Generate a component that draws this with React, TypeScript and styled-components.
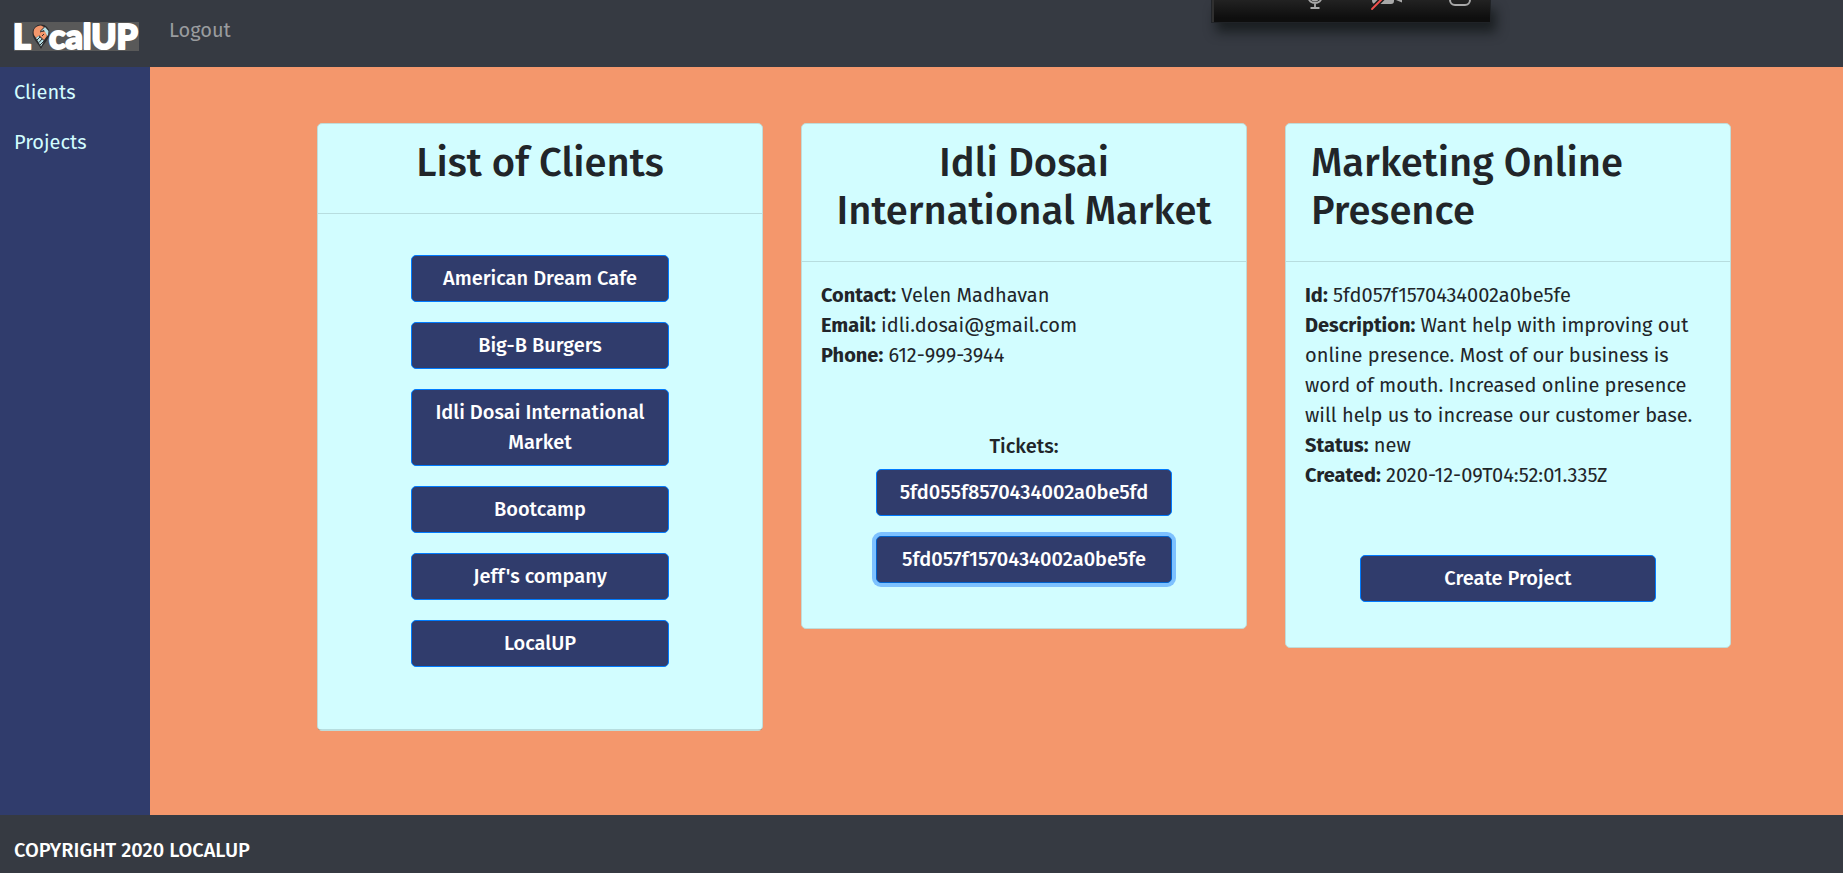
import React, { useState } from 'react';
import styled, { createGlobalStyle, css } from 'styled-components';

const color = {
  slate: '#363a42',
  navy: '#303c6c',
  coral: '#f4976c',
  ice: '#d2fdff',
  ink: '#212529',
  line: 'rgba(0, 0, 0, 0.125)',
};

const GlobalStyle = createGlobalStyle`
  *, *::before, *::after { box-sizing: border-box; }
  body {
    margin: 0;
    background: ${color.slate};
    color: ${color.ink};
    font: 400 20px/30px 'Fira Sans', 'Noto Sans', sans-serif;
  }
`;

const Page = styled.div`
  min-height: 100vh;
  display: flex;
  flex-direction: column;
`;

const Navbar = styled.header`
  display: flex;
  align-items: flex-start;
  gap: 30px;
  height: 67px;
  padding: 0 14px;
  background: ${color.slate};
`;

const Brand = styled.a`
  display: block;
  padding-top: 22px;
  line-height: 0;

  svg { overflow: visible; }
`;

const NavLink = styled.a`
  padding-top: 15px;
  color: #9a9c9f;
  text-decoration: none;
`;

const Content = styled.div`
  flex: 1;
  display: flex;
`;

const Sidebar = styled.nav`
  flex: 0 0 150px;
  display: flex;
  flex-direction: column;
  gap: 20px;
  padding: 10px 14px;
  background: ${color.navy};
`;

const SideLink = styled.a`
  color: ${color.ice};
  text-decoration: none;
`;

const Main = styled.main`
  flex: 1;
  display: grid;
  grid-template-columns: repeat(3, minmax(0, 1fr));
  align-items: start;
  gap: 38px;
  padding: 56px 112px 84px 167px;
  background: ${color.coral};
`;

const Card = styled.section`
  background: ${color.ice};
  border: 1px solid #bfdcd9;
  border-radius: 5px;
`;

const CardHeader = styled.div<{ $align?: string }>`
  padding: 15px 25px 26px;
  border-bottom: 1px solid ${color.line};
  text-align: ${(p) => p.$align ?? 'center'};
`;

const Title = styled.h1`
  margin: 0;
  font-size: 40px;
  line-height: 48px;
  font-weight: 500;
`;

const CardBody = styled.div`
  padding: 18px 19px 45px;
`;

const Details = styled.dl`
  margin: 0;
`;

const Detail = styled.div`
  dt, dd {
    display: inline;
    margin: 0;
  }
  dt {
    font-weight: 700;
  }
`;

const ButtonStack = styled.div<{ $inset: number }>`
  display: flex;
  flex-direction: column;
  gap: 20px;
  padding: 0 ${(p) => p.$inset}px;
`;

const ClientList = styled(ButtonStack)`
  padding-top: 41px;
  padding-bottom: 62px;
  border-bottom: 1px solid ${color.line};
`;

const Tickets = styled.h2`
  margin: 61px 0 8px;
  font-size: 20px;
  line-height: 30px;
  font-weight: 500;
  text-align: center;
`;

const Actions = styled(ButtonStack)`
  margin-top: 65px;
`;

const Button = styled.button<{ $active?: boolean }>`
  padding: 7px 20px 8px;
  border: 1px solid #007bff;
  border-radius: 5px;
  background: ${color.navy};
  color: #fff;
  font: 500 20px/30px 'Fira Sans', 'Noto Sans', sans-serif;
  cursor: pointer;
  ${(p) =>
    p.$active &&
    css`
      border-color: #0062cc;
      box-shadow: 0 0 0 4px #7dc1ff;
    `}
`;

const Footer = styled.footer`
  padding: 20px 14px 8px;
  background: ${color.slate};
  color: #fff;
  font-weight: 500;
  text-transform: uppercase;
`;

/* Meeting controls docked over the top edge of the window */
const CallBar = styled.div`
  position: fixed;
  top: 0;
  left: 1211px;
  display: flex;
  align-items: flex-start;
  width: 280px;
  height: 23px;
  padding-left: 91px;
  gap: 49px;
  background: linear-gradient(#222 0, #0e0e0e 18px);
  border: 1px solid #202327;
  border-top: 0;
  box-shadow: inset 2px 0 0 #303030, 5px 9px 12px rgba(10, 16, 16, 0.65);
`;

const CallButton = styled.button`
  width: 24px;
  height: 12px;
  padding: 0;
  border: 0;
  background: none;
  line-height: 0;

  svg { overflow: visible; }
`;

const Logo = () => (
  <svg width="125" height="29" viewBox="0 0 125 29" role="img" aria-label="LocalUP">
    <rect width="125" height="29" fill="#595959" />
    <g
      fill="#fff"
      stroke="#fff"
      strokeWidth="2"
      strokeLinejoin="round"
      fontFamily="Lato, sans-serif"
      fontWeight="900"
      fontSize="34"
    >
      <text x="-1" y="27">L</text>
      <text x="35" y="27">calUP</text>
    </g>
    <path
      d="M27 27C24 21 18.500 17 18.500 11A8.500 8.500 0 0 1 35.500 11C35.500 17 30 21 27 27Z"
      fill="#2b2b2e"
    />
    <path d="M20 13C18.500 7 22 3.500 27 3.500L30 5L26 9L27 12L22 16Z" fill="#f4976c" />
    <path d="M31 5L34.500 9L34 14L31.500 12L30 8L26.500 9.500Z" fill="#b4dfe5" />
    <path d="M27 10L31 9.500L33 14L30 18L25 13Z" fill="#f4976c" />
    <path d="M22 16L24.500 14L30 19L27 24.500Z" fill="#b4dfe5" />
    <path d="M23 18L26 15M25 20.500L28 17M26 23L30 19M28 14L30 12" stroke="#2b2b2e" strokeWidth="1" />
  </svg>
);

const MicIcon = () => (
  <svg width="24" height="12" viewBox="0 0 24 12" fill="none" stroke="#a8a8a8" strokeWidth="1.800">
    <path d="M5.500 -2A6.500 5 0 0 0 18.500 -2M8.500 -2A3.500 2.500 0 0 0 15.500 -2M12 3V8M7.500 8H16.500" />
  </svg>
);

const CameraOffIcon = () => (
  <svg width="24" height="12" viewBox="0 0 24 12">
    <path d="M-4 -4H18V1Q18 4 15 4H-1Q-4 4 -4 0ZM20 0L26 -5V2.500Z" fill="#a8a8a8" />
    <path d="M-1 6L9 -4" stroke="#1c1c1c" strokeWidth="5" />
    <path d="M-4 9L8 -3" stroke="#f0504c" strokeWidth="1.800" strokeLinecap="round" />
  </svg>
);

const ShareIcon = () => (
  <svg width="24" height="12" viewBox="0 0 24 12" fill="none" stroke="#a8a8a8" strokeWidth="2">
    <rect x="1" y="-14" width="20" height="19" rx="5" />
  </svg>
);

const clients = [
  'American Dream Cafe',
  'Big-B Burgers',
  'Idli Dosai International Market',
  'Bootcamp',
  "Jeff's company",
  'LocalUP',
];

const contact = [
  ['Contact', 'Velen Madhavan'],
  ['Email', 'idli.dosai@gmail.com'],
  ['Phone', '612-999-3944'],
];

const tickets = ['5fd055f8570434002a0be5fd', '5fd057f1570434002a0be5fe'];

const ticketInfo = [
  ['Id', '5fd057f1570434002a0be5fe'],
  [
    'Description',
    'Want help with improving out online presence. Most of our business is word of mouth. Increased online presence will help us to increase our customer base.',
  ],
  ['Status', 'new'],
  ['Created', '2020-12-09T04:52:01.335Z'],
];

const DetailList = ({ items }: { items: string[][] }) => (
  <Details>
    {items.map(([label, value]) => (
      <Detail key={label}>
        <dt>{label}:</dt> <dd>{value}</dd>
      </Detail>
    ))}
  </Details>
);

export default function App() {
  const [selected, setSelected] = useState(tickets[1]);

  return (
    <Page>
      <GlobalStyle />
      <Navbar>
        <Brand href="#home"><Logo /></Brand>
        <NavLink href="#logout">Logout</NavLink>
      </Navbar>

      <Content>
        <Sidebar>
          <SideLink href="#clients">Clients</SideLink>
          <SideLink href="#projects">Projects</SideLink>
        </Sidebar>

        <Main>
          <Card>
            <CardHeader><Title>List of Clients</Title></CardHeader>
            <ClientList $inset={93}>
              {clients.map((name) => <Button key={name}>{name}</Button>)}
            </ClientList>
          </Card>

          <Card>
            <CardHeader><Title>Idli Dosai International Market</Title></CardHeader>
            <CardBody>
              <DetailList items={contact} />
              <Tickets>Tickets:</Tickets>
              <ButtonStack $inset={55}>
                {tickets.map((id) => (
                  <Button key={id} $active={id === selected} onClick={() => setSelected(id)}>
                    {id}
                  </Button>
                ))}
              </ButtonStack>
            </CardBody>
          </Card>

          <Card>
            <CardHeader $align="left"><Title>Marketing Online Presence</Title></CardHeader>
            <CardBody>
              <DetailList items={ticketInfo} />
              <Actions $inset={55}><Button>Create Project</Button></Actions>
            </CardBody>
          </Card>
        </Main>
      </Content>

      <Footer>Copyright 2020 LocalUP</Footer>

      <CallBar>
        <CallButton aria-label="Mute"><MicIcon /></CallButton>
        <CallButton aria-label="Start video"><CameraOffIcon /></CallButton>
        <CallButton aria-label="Share"><ShareIcon /></CallButton>
      </CallBar>
    </Page>
  );
}
